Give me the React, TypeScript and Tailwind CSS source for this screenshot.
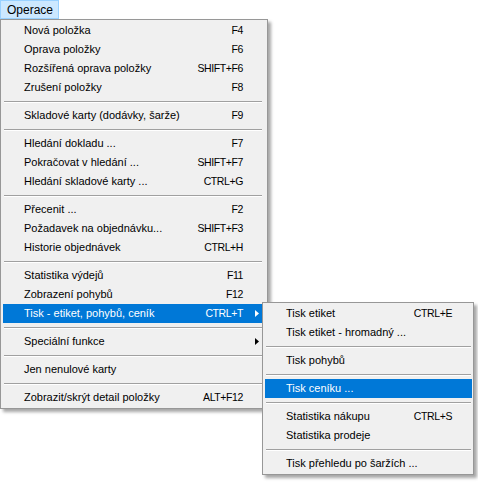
import React from 'react';

type Entry =
  | { sep: true }
  | { label: string; key?: string; sub?: boolean; active?: boolean };

const mainItems: Entry[] = [
  { label: 'Nová položka', key: 'F4' },
  { label: 'Oprava položky', key: 'F6' },
  { label: 'Rozšířená oprava položky', key: 'SHIFT+F6' },
  { label: 'Zrušení položky', key: 'F8' },
  { sep: true },
  { label: 'Skladové karty (dodávky, šarže)', key: 'F9' },
  { sep: true },
  { label: 'Hledání dokladu ...', key: 'F7' },
  { label: 'Pokračovat v hledání ...', key: 'SHIFT+F7' },
  { label: 'Hledání skladové karty ...', key: 'CTRL+G' },
  { sep: true },
  { label: 'Přecenit ...', key: 'F2' },
  { label: 'Požadavek na objednávku...', key: 'SHIFT+F3' },
  { label: 'Historie objednávek', key: 'CTRL+H' },
  { sep: true },
  { label: 'Statistika výdejů', key: 'F11' },
  { label: 'Zobrazení pohybů', key: 'F12' },
  { label: 'Tisk - etiket, pohybů, ceník', key: 'CTRL+T', sub: true, active: true },
  { sep: true },
  { label: 'Speciální funkce', sub: true },
  { sep: true },
  { label: 'Jen nenulové karty' },
  { sep: true },
  { label: 'Zobrazit/skrýt detail položky', key: 'ALT+F12' },
];

const subItems: Entry[] = [
  { label: 'Tisk etiket', key: 'CTRL+E' },
  { label: 'Tisk etiket - hromadný ...' },
  { sep: true },
  { label: 'Tisk pohybů' },
  { sep: true },
  { label: 'Tisk ceníku ...', active: true },
  { sep: true },
  { label: 'Statistika nákupu', key: 'CTRL+S' },
  { label: 'Statistika prodeje' },
  { sep: true },
  { label: 'Tisk přehledu po šaržích ...' },
];

const Arrow = ({ white }: { white?: boolean }) => (
  <svg width="4" height="7" viewBox="0 0 4 7" className="absolute right-[4px] top-[6px]">
    <path d="M0 0 L4 3.5 L0 7 Z" fill={white ? '#ffffff' : '#000000'} />
  </svg>
);

const MenuRows = ({ items }: { items: Entry[] }) => (
  <>
    {items.map((it, i) =>
      'sep' in it ? (
        <div key={i} className="h-[9px] flex flex-col justify-center px-[1px]">
          <div className="h-px bg-[#a0a0a0]" />
          <div className="h-px bg-white" />
        </div>
      ) : (
        <div
          key={i}
          className={`relative h-[19px] flex items-center justify-between pl-[21px] pr-[20px] ${
            it.active ? 'bg-[#0078d7] text-white' : 'text-black'
          }`}
        >
          <span className="whitespace-nowrap">{it.label}</span>
          {it.key && <span className="whitespace-nowrap text-[10.5px] tracking-[-0.4px]">{it.key}</span>}
          {it.sub && <Arrow white={it.active} />}
        </div>
      ),
    )}
  </>
);

export default function App() {
  return (
    <div
      className="relative w-[478px] h-[483px] bg-white text-[11px] leading-none"
      style={{ fontFamily: '"Liberation Sans", Arial, sans-serif' }}
    >
      <div className="w-[59px] h-[19px] bg-[#cce8ff] border border-[#99d1ff] flex items-center pl-[6px] text-[12px] text-black">
        Operace
      </div>
      <div className="w-[268px] bg-[#f0f0f0] border border-[#979797] pt-px pb-px pl-[2px] pr-[4px] shadow-[3px_3px_3px_rgba(0,0,0,0.35)]">
        <MenuRows items={mainItems} />
      </div>
      <div className="absolute left-[262px] top-[302px] w-[212px] bg-[#f0f0f0] border border-[#979797] pt-px pb-px pl-[2px] pr-px shadow-[3px_3px_3px_rgba(0,0,0,0.35)]">
        <MenuRows items={subItems} />
      </div>
    </div>
  );
}
